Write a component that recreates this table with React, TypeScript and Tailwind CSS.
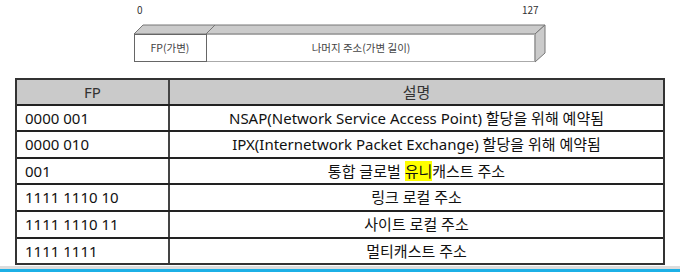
import React from 'react';

const rows = [
  { fp: '0000 001', desc: <>NSAP(Network Service Access Point) 할당을 위해 예약됨</>, h: 'h-[26px]' },
  { fp: '0000 010', desc: <>IPX(Internetwork Packet Exchange) 할당을 위해 예약됨</>, h: 'h-[27px]' },
  {
    fp: '001',
    desc: (
      <>
        통합 글로벌 <span className="bg-[#ffff00]">유니</span>캐스트 주소
      </>
    ),
    h: 'h-[26px]'
  },
  { fp: '1111 1110 10', desc: <>링크 로컬 주소</>, h: 'h-[27px]' },
  { fp: '1111 1110 11', desc: <>사이트 로컬 주소</>, h: 'h-[27px]' },
  { fp: '1111 1111', desc: <>멀티캐스트 주소</>, h: 'h-[26px]' }
];

function AddressDiagram() {
  const font = "'Noto Sans CJK KR', 'Noto Sans', sans-serif";
  return (
    <svg width="680" height="78" viewBox="0 0 680 78" className="block">
      <text x="137" y="14" fontSize="10" fill="#333" fontFamily={font}>0</text>
      <text x="522" y="14" fontSize="10" fill="#333" fontFamily={font}>127</text>

      {/* top face */}
      <polygon points="134,34 143,25 545,25 535,34" fill="#cbcbcb" stroke="#777" strokeWidth="1" />
      <line x1="206" y1="34" x2="215" y2="25" stroke="#777" strokeWidth="1" />
      {/* side face */}
      <polygon points="535,34 545,25 545,53 535,62" fill="#cbcbcb" stroke="#777" strokeWidth="1" />
      {/* front face */}
      <rect x="206.5" y="34.5" width="328" height="27" fill="#fff" stroke="#aaa" strokeWidth="1" />
      <rect x="134.5" y="34.5" width="72" height="27" fill="#fff" stroke="#666" strokeWidth="1" />

      <text x="170" y="52" fontSize="10.5" fill="#444" textAnchor="middle" fontFamily={font}>FP(가변)</text>
      <text x="361" y="52" fontSize="10.5" fill="#444" textAnchor="middle" fontFamily={font}>나머지 주소(가변 길이)</text>
    </svg>
  );
}

export default function App() {
  return (
    <div className="w-[680px] h-[275px] bg-white flex flex-col overflow-hidden font-['Noto_Sans','Noto_Sans_CJK_KR',sans-serif] text-[15px] text-[#111]">
      <AddressDiagram />

      {/* FP table */}
      <div className="ml-[15px] w-[650px] border-2 border-[#333]">
        <div className="flex h-[24px] bg-[#cacaca] text-[#333]">
          <div className="w-[153px] border-r-2 border-[#444] flex items-center justify-center">FP</div>
          <div className="flex-1 flex items-center justify-center">설명</div>
        </div>
        {rows.map((r, i) => (
          <div key={i} className={`flex border-t-2 border-[#222] ${r.h}`}>
            <div className="w-[153px] border-r-2 border-[#444] flex items-center pl-[8px]">{r.fp}</div>
            <div className="flex-1 flex items-center justify-center">
              <span>{r.desc}</span>
            </div>
          </div>
        ))}
      </div>

      <div className="mt-[1px] h-[3px] bg-[#dcdcdc]" />
      <div className="h-[3px] bg-[#1cb0e6]" />
    </div>
  );
}
